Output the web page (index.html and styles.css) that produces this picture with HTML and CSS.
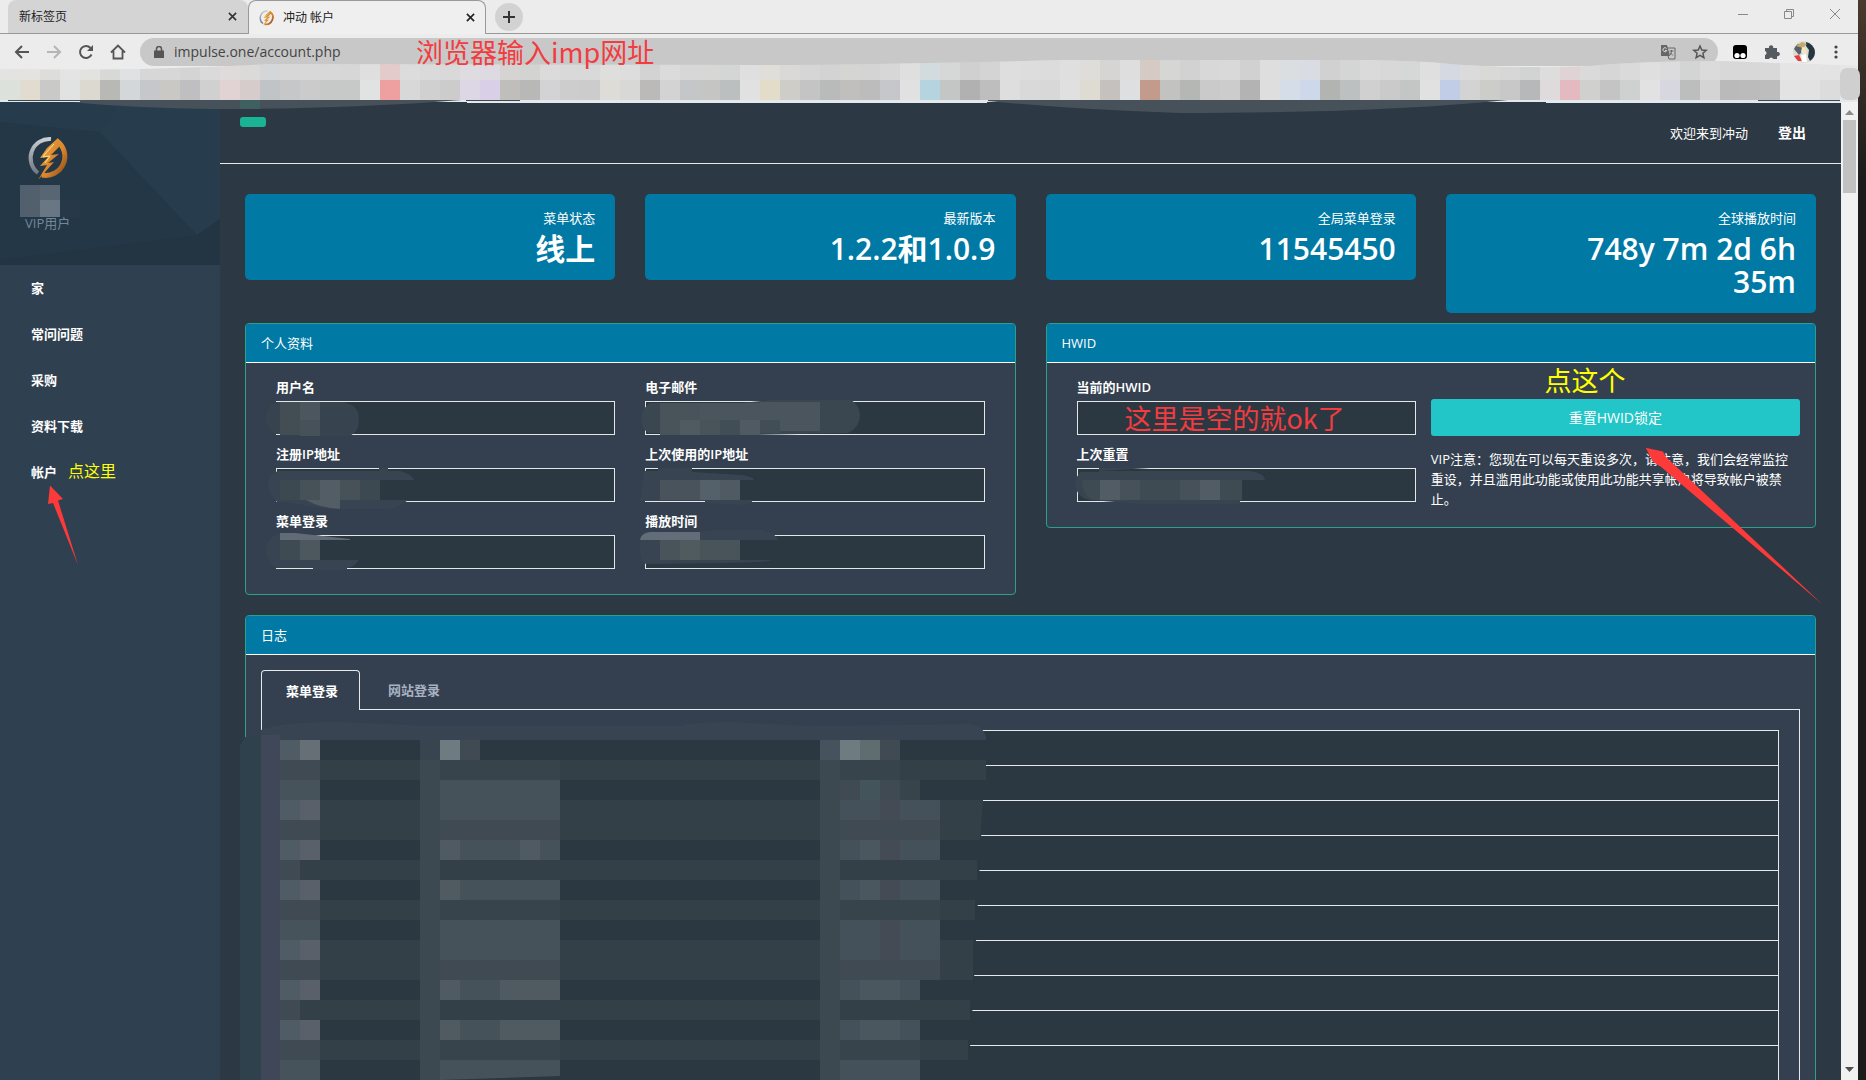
FILE: index.html
```html
<!DOCTYPE html>
<html lang="zh-CN">
<head>
<meta charset="utf-8">
<title>冲动 帐户</title>
<link rel="stylesheet" href="styles.css">
</head>
<body>
<svg width="0" height="0" class="defs" aria-hidden="true">
  <defs>
    <linearGradient id="silver" x1="0" y1="0" x2="0" y2="1"><stop offset="0" stop-color="#c9ccd0"/><stop offset="1" stop-color="#6f7884"/></linearGradient>
    <linearGradient id="gold" x1="0" y1="0" x2="1" y2="1"><stop offset="0" stop-color="#f2b84a"/><stop offset=".6" stop-color="#d9822b"/><stop offset="1" stop-color="#8a4a1a"/></linearGradient>
    <symbol id="logo" viewBox="0 0 44 44">
      <path d="M11 37A19 19 0 0 1 24 3" fill="none" stroke="url(#silver)" stroke-width="4"/>
      <path d="M30 5A19 19 0 0 1 15 39" fill="none" stroke="url(#gold)" stroke-width="5"/>
      <path d="M31 2 20 12l-7 10 8-1-8 9 7-1-9 15 16-18-6 1 11-9-8 1 10-10z" fill="url(#gold)"/>
      <path d="M27 8 18 18l-2 3 7-1-5 7" fill="none" stroke="#ffe08a" stroke-width="1"/>
    </symbol>
  </defs>
</svg>
<div class="window">
  <header class="chrome">
    <div class="tabs">
      <div class="tab"><span>新标签页</span><button aria-label="关闭标签页"><svg viewBox="0 0 10 10" width="9" height="9"><path d="M1 1l8 8M9 1l-8 8" stroke="#333" stroke-width="1.8"/></svg></button></div>
      <div class="tab active"><svg class="fav" width="16" height="16"><use href="#logo"/></svg><span>冲动 帐户</span><button aria-label="关闭标签页"><svg viewBox="0 0 10 10" width="9" height="9"><path d="M1 1l8 8M9 1l-8 8" stroke="#222" stroke-width="1.8"/></svg></button></div>
      <button class="plus" aria-label="新标签"><svg viewBox="0 0 12 12" width="12" height="12"><path d="M6 0v12M0 6h12" stroke="#333" stroke-width="2"/></svg></button>
      <div class="wincontrols">
        <button aria-label="最小化"><svg width="12" height="12"><path d="M1 6.5h10" stroke="#888"/></svg></button>
        <button aria-label="还原"><svg width="12" height="12" fill="none" stroke="#888"><path d="M1.500 3.500h7v7h-7zM3.500 3.500v-2h7v7h-2"/></svg></button>
        <button aria-label="关闭"><svg width="12" height="12"><path d="M1 1l10 10M11 1L1 11" stroke="#888"/></svg></button>
      </div>
    </div>
    <div class="toolbar">
      <button aria-label="后退"><svg viewBox="0 0 16 16" width="16" height="16" fill="none" stroke="#555" stroke-width="2"><path d="M15 8H2M8 2L2 8l6 6"/></svg></button>
      <button aria-label="前进"><svg viewBox="0 0 16 16" width="16" height="16" fill="none" stroke="#b5b5b5" stroke-width="2"><path d="M1 8h13M8 2l6 6-6 6"/></svg></button>
      <button aria-label="刷新"><svg viewBox="0 0 16 16" width="16" height="16"><path d="M13.500 10.500A6 6 0 1 1 12.500 4" fill="none" stroke="#555" stroke-width="2"/><path d="M15 1v6H9z" fill="#555"/></svg></button>
      <button aria-label="主页"><svg viewBox="0 0 16 16" width="16" height="16"><path d="M1 8.500L8 1.500l7 7M3.500 7v7.500h9V7" fill="none" stroke="#555" stroke-width="1.800"/></svg></button>
      <div class="address">
        <svg width="10" height="12" viewBox="0 0 10 12"><path d="M0 4.500h10V12H0z" fill="#555"/><path d="M2.500 5V3a2.500 2.500 0 0 1 5 0v2" fill="none" stroke="#555" stroke-width="1.500"/></svg>
        <input aria-label="地址" value="impulse.one/account.php" spellcheck="false">
        <svg width="16" height="16" viewBox="0 0 16 16"><path d="M1 1h6l3 11H1z" fill="#666"/><path d="M7 4h8v11H9l-1-3" fill="none" stroke="#666"/><path d="M6.500 4.500a2 2 0 1 0 .3 2H5" fill="none" stroke="#ddd"/><path d="M9.500 7h4M11.500 6v1c0 2-1 4-2 4.500M10 8.500l3 3" fill="none" stroke="#666"/></svg>
        <svg width="16" height="16" viewBox="0 0 16 16"><path d="M8 2l1.800 4 4.400.4-3.300 2.900 1 4.300L8 11.300l-3.900 2.300 1-4.300L1.800 6.400 6.200 6z" fill="none" stroke="#555" stroke-width="1.500"/></svg>
      </div>
      <div class="actions">
        <button aria-label="扩展程序"><svg width="14" height="14" viewBox="0 0 14 14"><rect width="14" height="14" rx="3"/><circle cx="4" cy="10.500" r="2.600" fill="#fff"/><circle cx="10" cy="10.500" r="2.600" fill="#fff"/></svg></button>
        <button aria-label="管理扩展"><svg width="16" height="16" viewBox="0 0 16 16"><path d="M1 4h4a2.200 2.200 0 1 1 4.200 0H13v4a2.200 2.200 0 1 1 0 4.200V15H9.200a2.200 2.200 0 0 0-4.200 0H1v-3.800a2.200 2.200 0 0 0 0-4.200z" fill="#555b60"/></svg></button>
        <button aria-label="用户"><svg width="22" height="22" viewBox="0 0 22 22"><circle cx="11" cy="11" r="11" fill="#d8dcd4"/><path d="M13 1a11 11 0 0 1 9 10 11 11 0 0 1-5 9l-2-4 1-7-3-4z" fill="#263640"/><path d="M1 8a11 11 0 0 1 4-5l4 1 2 5-5 5z" fill="#56606a"/><path d="M3 5l6-4 5 2-4 4z" fill="#c4aa6c"/><path d="M9 6l4 1 1 5-3 2-3-3z" fill="#f1e5c3"/><path d="M1 15l5-1 3 6-4 0z" fill="#e43b3b"/><path d="M8 14l5-1 1 8-5 0z" fill="#fff"/></svg></button>
        <button aria-label="菜单"><svg width="4" height="14" viewBox="0 0 4 14" fill="#444"><circle cx="2" cy="2" r="1.600"/><circle cx="2" cy="7" r="1.600"/><circle cx="2" cy="12" r="1.600"/></svg></button>
      </div>
      <p class="note red note-url">浏览器输入imp网址</p>
    </div>
    <div class="bookmarks">
      <svg class="bookmark-mosaic" width="1862" height="54" viewBox="0 59 1862 54" aria-hidden="true">
        <defs><clipPath id="brush"><path d="M0 69Q120 72 270 64L790 65Q960 63 1060 60H1370Q1420 61 1440 63Q1500 69 1590 66Q1640 61 1720 61L1858 66V100H0z"/></clipPath></defs>
        <path d="M72 100h390Q350 109 215 109Q130 108 72 102zM988 100h520Q1380 113 1180 113Q1080 110 988 101z" fill="#46515a"/>
        <path d="M240 100h20v9h-20z" fill="#3f5f60"/>
        <path d="M0 100h80v2H0zM467 101h520v2H467zM1546 101h295v2H1546z" fill="#e3e8ec"/>
        <path d="M8 100h72v1H8zM466 100h54v1h-54zM1758 100h82v1h-82z" fill="#3d4852"/>
        <g clip-path="url(#brush)">
          <path d="M0 59h1862v41H0z" fill="#dedede"/>
          <path d="M0 59h140v41H0zM1720 59h140v41h-140z" fill="#e6e6e6"/>
          <g id="marks" class="cells">
            <rect x="0" y="80" fill="#dde1db"/><rect x="20" y="80" fill="#e1dccf"/><rect x="40" y="80" fill="#c9c9c8"/><rect x="60" y="80" fill="#e1e2e2"/><rect x="80" y="80" fill="#dbd9d0"/><rect x="100" y="80" fill="#b8b8b5"/><rect x="120" y="80" fill="#d3d7d9"/><rect x="140" y="80" fill="#c5c7ca"/><rect x="160" y="80" fill="#cac8c5"/><rect x="180" y="80" fill="#bfbec0"/><rect x="200" y="80" fill="#cfd0cf"/><rect x="220" y="80" fill="#e1d3d3"/><rect x="240" y="80" fill="#d7cccc"/><rect x="260" y="80" fill="#c0c4c7"/><rect x="280" y="80" fill="#c5c7c8"/><rect x="300" y="80" fill="#cacbca"/><rect x="320" y="80" fill="#c7c9c8"/><rect x="340" y="80" fill="#c7c8c8"/><rect x="360" y="80" fill="#e1e2e2"/><rect x="380" y="80" fill="#ee9f9f"/><rect x="400" y="80" fill="#d8d8d8"/><rect x="420" y="80" fill="#cfd0cf"/><rect x="440" y="80" fill="#cccccc"/><rect x="460" y="80" fill="#ddd6e5"/><rect x="480" y="80" fill="#d9d0e8"/><rect x="500" y="80" fill="#bfbebb"/><rect x="520" y="80" fill="#b8b8b6"/><rect x="540" y="80" fill="#d3d3d5"/><rect x="560" y="80" fill="#cdcdcd"/><rect x="580" y="80" fill="#cccccc"/><rect x="600" y="80" fill="#dddcd6"/><rect x="620" y="80" fill="#d8d9d7"/><rect x="640" y="80" fill="#bbbab8"/><rect x="660" y="80" fill="#d3d3d3"/><rect x="680" y="80" fill="#c5c6c8"/>
            <rect x="700" y="80" fill="#c5c5c3"/><rect x="720" y="80" fill="#bcbfbf"/><rect x="740" y="80" fill="#e1e1e1"/><rect x="760" y="80" fill="#e3dcc9"/><rect x="780" y="80" fill="#cfcdc8"/><rect x="800" y="80" fill="#c4c4c4"/><rect x="820" y="80" fill="#b9bbba"/><rect x="840" y="80" fill="#c1bfbd"/><rect x="860" y="80" fill="#bcbcbc"/><rect x="880" y="80" fill="#c5c7ca"/><rect x="900" y="80" fill="#e1e1e1"/><rect x="920" y="80" fill="#b5d4df"/><rect x="940" y="80" fill="#c4c5c5"/><rect x="960" y="80" fill="#b0b1b0"/><rect x="980" y="80" fill="#bdbebd"/><rect x="1000" y="80" fill="#dedede"/><rect x="1020" y="80" fill="#d9d9d9"/><rect x="1040" y="80" fill="#d8d8d8"/><rect x="1060" y="80" fill="#e0e0e0"/><rect x="1080" y="80" fill="#dedbd2"/><rect x="1100" y="80" fill="#c4c1be"/><rect x="1120" y="80" fill="#dddfe1"/><rect x="1140" y="80" fill="#c39b8d"/><rect x="1160" y="80" fill="#c2c3c0"/><rect x="1180" y="80" fill="#b5b7b5"/><rect x="1200" y="80" fill="#cacaca"/><rect x="1220" y="80" fill="#cccccc"/><rect x="1240" y="80" fill="#b3b3b3"/><rect x="1260" y="80" fill="#dededf"/><rect x="1280" y="80" fill="#d5dde9"/><rect x="1300" y="80" fill="#cdd8ea"/><rect x="1320" y="80" fill="#b2b4b2"/><rect x="1340" y="80" fill="#bcc0c1"/><rect x="1360" y="80" fill="#d0d0d0"/><rect x="1380" y="80" fill="#cacaca"/><rect x="1400" y="80" fill="#c4c5c5"/><rect x="1420" y="80" fill="#e1e1e1"/><rect x="1440" y="80" fill="#c1cde6"/><rect x="1460" y="80" fill="#d3d3d3"/><rect x="1480" y="80" fill="#cccdc9"/><rect x="1500" y="80" fill="#c9c8c9"/><rect x="1520" y="80" fill="#b7b8b9"/><rect x="1540" y="80" fill="#dfdadc"/><rect x="1560" y="80" fill="#e4bac0"/><rect x="1580" y="80" fill="#d0d1cf"/><rect x="1600" y="80" fill="#c4c4c4"/><rect x="1620" y="80" fill="#cfd0d0"/><rect x="1640" y="80" fill="#e2e2e2"/><rect x="1660" y="80" fill="#d6d7df"/><rect x="1680" y="80" fill="#bbbebd"/><rect x="1700" y="80" fill="#d3d4d3"/><rect x="1720" y="80" fill="#bbbaba"/><rect x="1740" y="80" fill="#bcbbbc"/><rect x="1760" y="80" fill="#bdbdbd"/><rect x="1780" y="80" fill="#e3e3e3"/><rect x="1800" y="80" fill="#e2e2e2"/><rect x="1820" y="80" fill="#dcdcdc"/>
          </g>
          <use href="#marks" y="-20" opacity=".3"/>
        </g>
        <rect x="1840" y="68" width="20" height="32" rx="7" fill="#cfcfcf"/>
      </svg>
    </div>
  </header>

  <div class="page">
    <aside class="sidebar">
      <div class="profile">
        <svg class="facets" viewBox="0 102 220 163" preserveAspectRatio="none" aria-hidden="true">
          <path d="M0 102h220v163H0z" fill="#243747"/>
          <path d="M0 102h120l-20 30L0 122z" fill="#263b4b"/>
          <path d="M120 102h100v117l-23 16L100 132z" fill="#273c4c"/>
          <path d="M197 235l23-16v46H0v-5z" fill="#233543"/>
        </svg>
        <svg class="logo" width="44" height="44"><use href="#logo"/></svg>
        <svg class="name" width="60" height="32" aria-hidden="true"><path d="M0 0h40v32H0z" fill="#52606e"/><path d="M20 0h20v15H20z" fill="#586573"/><path d="M20 15h20v17H20z" fill="#697784"/><path d="M40 15h20v17H40z" fill="#273949"/></svg>
        <p>VIP用户</p>
      </div>
      <nav>
        <a href="#">家</a>
        <a href="#">常问问题</a>
        <a href="#">采购</a>
        <a href="#">资料下载</a>
        <a href="#">帐户<span class="note yellow note-nav">点这里</span></a>
      </nav>
      <svg class="arrow-nav" width="40" height="90" viewBox="40 480 40 90" aria-hidden="true"><path d="M50 485.500L63 499l-5 1.500L78 565 53 503l-5 1z" fill="#fb3a39"/></svg>
    </aside>

    <main>
      <div class="topbar">
        <button class="toggle" aria-label="切换菜单"></button>
        <span>欢迎来到冲动</span>
        <a href="#">登出</a>
      </div>
      <div class="content">
        <section class="stats">
          <div class="stat"><p>菜单状态</p><h2>线上</h2></div>
          <div class="stat"><p>最新版本</p><h2>1.2.2和1.0.9</h2></div>
          <div class="stat"><p>全局菜单登录</p><h2>11545450</h2></div>
          <div class="stat"><p>全球播放时间</p><h2>748y 7m 2d 6h 35m</h2></div>
        </section>

        <section class="panels">
          <div class="panel">
            <h3>个人资料</h3>
            <div class="fields">
              <div class="field"><label for="user">用户名</label><input id="user" readonly></div>
              <div class="field"><label for="mail">电子邮件</label><input id="mail" readonly></div>
              <div class="field"><label for="regip">注册IP地址</label><input id="regip" readonly></div>
              <div class="field"><label for="lastip">上次使用的IP地址</label><input id="lastip" readonly></div>
              <div class="field"><label for="logins">菜单登录</label><input id="logins" readonly></div>
              <div class="field"><label for="play">播放时间</label><input id="play" readonly></div>
            </div>
            <svg class="mosaic" width="770" height="272" viewBox="245 323 770 272" aria-hidden="true">
              <path d="M276 402h67q16 3 16 17t-10 17h-42v-2h-31q-10-4-10-16t10-16z" fill="#37434f"/>
              <path d="M280 402h20v33h-20z" fill="#434e54"/><path d="M300 402h20v18h-20z" fill="#4c565f"/><path d="M300 420h20v16h-20z" fill="#465159"/>
              <path d="M650 403l90 0 32-3h79q9 5 9 16t-12 17l-98 2h-87v-2h-14q-8-4-8-14t9-16z" fill="#3a4650"/>
              <path d="M660 403h80v32h-80z" fill="#48535a"/><path d="M700 403h80v17h-80zM760 402h60v29h-60z" fill="#4a555d"/><path d="M680 420h20v15h-20zM740 420h20v15h-20z" fill="#505b61"/><path d="M720 420h20v15h-20zM760 420h20v13h-20z" fill="#424e56"/>
              <path d="M278 471h101v-3h9v3h12q12 3 14 9h-34v20h28q-10 9-22 9h-60l-40-7h-9q-9-9-9-18 0-10 10-13z" fill="#384452"/>
              <path d="M280 480h20v20h-20zM360 480h20v20h-20z" fill="#3d4951"/><path d="M300 480h20v20h-20zM340 480h20v20h-20z" fill="#465158"/><path d="M320 480h20v29q-20-1-34-9h14z" fill="#525d66"/>
              <path d="M644 471h14v-3h34v4l50 3q12 2 12 5h-14v20h13q-2 5-12 5l-36-2v-2h-65z" fill="#384452"/>
              <path d="M660 480h80v20h-80z" fill="#48535b"/><path d="M700 480h20v20h-20z" fill="#54616a"/><path d="M720 480h20v20h-20z" fill="#4f5a62"/>
              <path d="M280 533h18l54 7h-32v20h39q-6 8-12 8v2h-34v-2h-37q-10-8-10-18 0-12 14-17z" fill="#384452"/>
              <path d="M280 533h15l55 6v1h-70z" fill="#606b77"/><path d="M280 540h20v20h-20z" fill="#3f4b53"/><path d="M300 540h20v20h-20z" fill="#4c575e"/>
              <path d="M644 532h50l20-2h46q15 2 18 10h-38v20h32q-8 3-46 3l-80 1q-6-2-6-12v-10z" fill="#384452"/>
              <path d="M640 540q1-7 10-8h50v8z" fill="#626d79"/><path d="M660 540h80v20h-80z" fill="#48535a"/><path d="M680 540h20v20h-20z" fill="#505b60"/>
            </svg>
          </div>
          <div class="panel">
            <h3>HWID</h3>
            <div class="hwid">
              <div class="hwid-fields">
                <div class="field"><label for="hwid">当前的HWID</label><input id="hwid" readonly></div>
                <div class="field"><label for="reset">上次重置</label><input id="reset" readonly></div>
              </div>
              <div class="hwid-action">
                <button>重置HWID锁定</button>
                <p>VIP注意：您现在可以每天重设多次，请注意，我们会经常监控重设，并且滥用此功能或使用此功能共享帐户将导致帐户被禁止。</p>
              </div>
            </div>
            <svg class="mosaic" width="770" height="205" viewBox="1046 323 770 205" aria-hidden="true">
              <path d="M1080 472h19v-4h-17 68l-50 3h150q14 2 15 9h-25v22h10q-6 2-20 2h-90l-50-4q-15-2-15-20z" fill="#384450"/>
              <path d="M1082 480h160v20h-150q-10-6-10-20z" fill="#3f4b53"/><path d="M1100 480h20v20h-20z" fill="#515c65"/><path d="M1120 480h20v20h-20zM1180 480h20v20h-20z" fill="#465159"/><path d="M1200 480h20v20h-20z" fill="#515c65"/>
            </svg>
            <p class="note red note-empty">这里是空的就ok了</p>
            <p class="note yellow note-click">点这个</p>
            <svg class="arrow-reset" width="190" height="165" viewBox="1640 443 190 165" aria-hidden="true"><path d="M1646.700 447.700L1664 451.500l3 5.500L1823.500 604.500 1661 466l-7-4z" fill="#fb3a39"/></svg>
          </div>
        </section>

        <section class="panel logs">
          <h3>日志</h3>
          <div class="logs-body">
            <div class="log-tabs"><button class="on">菜单登录</button><button>网站登录</button></div>
            <div class="log-box">
              <table aria-label="菜单登录"><tbody>
                <tr><td></td></tr><tr><td></td></tr><tr><td></td></tr><tr><td></td></tr><tr><td></td></tr><tr><td></td></tr><tr><td></td></tr><tr><td></td></tr><tr><td></td></tr><tr><td></td></tr><tr><td></td></tr>
              </tbody></table>
            </div>
          </div>
          <svg class="mosaic log-mosaic" width="750" height="360" viewBox="240 720 750 360" aria-hidden="true">
            <path d="M240 746q2-5 5-9h16v343h-21z" fill="#2e414d"/>
            <path d="M261 730q20-9 80-8l90 4h250q10-4 50-4l80 4 160-2q13 2 15 14v2H280v340h-19z" fill="#394452"/>
            <path d="M261 735h19v345h-19z" fill="#3f4758"/>
            <path d="M280 740h705l-2 60-5 100-5 100-5 80H280z" fill="#2b3741"/>
            <path d="M280 760h706v20H280zM280 800h703l-3 40H280zM280 860h697v20H280zM280 900h695v20H280zM280 940h693v40H280zM280 1000h690v20H280zM280 1040h688v20H280z" fill="#344048"/>
            <path d="M420 740h20v340h-20zM820 760h20v320h-20z" fill="#3d4951"/>
            <path d="M820 740h20v20h-20z" fill="#46525d"/><path d="M420 740h20v20h-20z" fill="#374550"/>
            <path d="M280 760h40v20h-40zM280 820h40v20h-40zM280 860h20v20h-20zM280 900h40v20h-40zM280 960h40v20h-40zM280 1000h20v20h-20zM280 1040h40v20h-40z" fill="#3f4a52"/>
            <path d="M280 780h40v20h-40zM280 920h40v20h-40zM280 1060h40v20h-40z" fill="#47535b"/>
            <path d="M280 740h20v20h-20zM280 800h20v20h-20zM280 840h20v20h-20zM280 880h20v20h-20zM280 940h20v20h-20zM280 980h20v20h-20zM280 1020h20v20h-20z" fill="#4f5b65"/>
            <path d="M300 800h20v20h-20zM300 840h20v20h-20zM300 880h20v20h-20zM300 940h20v20h-20zM300 980h20v20h-20zM300 1020h20v20h-20z" fill="#5a606a"/>
            <path d="M300 740h20v20h-20z" fill="#666f75"/>
            <path d="M440 740h20v20h-20zM840 740h20v20h-20z" fill="#6e7b80"/><path d="M860 740h20v20h-20z" fill="#5f6c70"/>
            <path d="M460 740h20v20h-20zM880 740h20v20h-20zM440 820h120v20H440zM440 960h120v20H440zM840 820h100v20H840zM840 960h100v20H840zM840 780h60v20h-60z" fill="#3f4a52"/>
            <path d="M440 760h120v20H440zM440 900h120v20H440zM440 1040h120v20H440zM840 760h60v20h-60zM840 900h100v20H840zM840 1040h80v20h-80zM900 780h20v20h-20z" fill="#38444c"/>
            <path d="M440 780h120v40H440zM440 840h120v20H440zM440 880h120v20H440zM440 920h120v40H440zM440 980h120v20H440zM440 1020h120v20H440zM440 1060h120v16l-120 4z" fill="#46525a"/>
            <path d="M840 800h100v20H840zM840 840h100v20H840zM840 880h100v20H840zM840 920h100v40H840zM840 980h80v20h-80zM840 1020h80v20h-80zM840 1060h80v20h-80z" fill="#45515a"/>
            <path d="M440 840h20v20h-20zM440 880h20v20h-20zM440 980h20v20h-20zM440 1020h20v20h-20zM520 840h20v20h-20zM500 980h60v20h-60zM500 1020h60v20h-60z" fill="#4f5b60"/>
            <path d="M860 840h20v20h-20zM860 880h20v20h-20zM860 980h40v20h-40zM860 1020h40v20h-40z" fill="#4b575f"/>
            <path d="M860 780h20v20h-20z" fill="#43545b"/><path d="M880 800h20v20h-20zM880 840h20v20h-20zM880 880h20v20h-20zM880 920h20v40h-20z" fill="#454b54"/>
          </svg>
        </section>
      </div>
    </main>
    <div class="scrollbar" aria-hidden="true">
      <svg width="9" height="5"><path d="M0 5l4.500-5L9 5z" fill="#8c8c8c"/></svg>
      <i></i>
      <svg width="9" height="5"><path d="M0 0h9L4.500 5z" fill="#505050"/></svg>
    </div>
  </div>
</div>
<div class="desktop" aria-hidden="true"></div>
</body>
</html>
```
FILE: styles.css
```css
* { box-sizing: border-box; }
body {
  margin: 0;
  display: flex;
  height: 100vh;
  overflow: hidden;
  background: #1c1c1c;
  color: #fff;
  font: 13px/18px "Open Sans", "Noto Sans CJK SC", sans-serif;
}
p, h2, h3 { margin: 0; }
button { border: 0; padding: 0; background: none; font: inherit; color: inherit; }
a { color: inherit; text-decoration: none; }
svg { display: block; flex: none; }
.defs { position: absolute; }
.window { flex: 1; min-width: 0; display: flex; flex-direction: column; }
.desktop { width: 8px; background: linear-gradient(#4a3b2f, #3a3028 60px, #1c1c1c 180px); }

/* browser chrome */
.chrome { background: #ececec; color: #222; position: relative; z-index: 2; }
.tabs { display: flex; height: 34px; padding-left: 8px; border-bottom: 1px solid #999; font-size: 12px; }
.tab { width: 240px; display: flex; align-items: center; padding: 0 11px; background: #d4d4d4; border-radius: 8px 8px 0 0; }
.tab span { flex: 1; }
.tab.active { width: 238px; height: 34px; background: #efefef; border: 1px solid #999; border-bottom: 0; gap: 8px; padding: 0 10px; }
.plus { width: 28px; height: 28px; margin: 3px 0 0 9px; border-radius: 50%; background: #d2d2d2; display: grid; place-items: center; }
.wincontrols { margin-left: auto; display: flex; gap: 34px; padding: 8px 17px 0 0; height: 20px; }
.toolbar { position: relative; display: flex; align-items: center; gap: 16px; height: 36px; padding: 0 6px 0 14px; }
.toolbar > button { flex: none; }
.address { flex: 1; height: 28px; margin: 0 -10px 0 -2px; padding: 0 10px 0 14px; display: flex; align-items: center; gap: 16px; background: #c8c8c8; border-radius: 14px; }
.address input { flex: 1; min-width: 0; margin-left: -6px; padding: 0; border: 0; background: none; color: #444; font: 14px/20px "Open Sans", sans-serif; outline: 0; }
.actions { display: flex; }
.actions button { width: 32px; height: 28px; display: grid; place-items: center; }
.bookmarks { height: 32px; position: relative; background: #e3e8ec; }
.bookmark-mosaic { position: absolute; left: 0; top: -11px; }
.cells rect { width: 20px; height: 20px; }

/* page */
.page { flex: 1; min-height: 0; display: flex; overflow: hidden; background: #2c3843; }
.sidebar { width: 220px; flex: none; background: #2f4050; position: relative; }
.profile { position: relative; height: 163px; padding: 34px 20px 0; color: #73879a; }
.facets { position: absolute; inset: 0; width: 100%; height: 100%; }
.logo { position: relative; margin-left: 7px; }
.name { position: relative; margin-top: 5px; }
.profile p { position: relative; margin: -3px 0 0 5px; }
nav a { position: relative; display: block; padding: 14px 31px; font-weight: 600; color: #fff; }
.arrow-nav { position: absolute; left: 40px; top: 378px; }
.scrollbar { width: 17px; flex: none; background: #f1f1f1; display: flex; flex-direction: column; align-items: center; padding: 8px 0; }
.scrollbar i { width: 13px; height: 73px; margin: 5px 0 auto; background: #c1c1c1; }

main { flex: 1; min-width: 0; }
.topbar { height: 62px; border-bottom: 1px solid #e7eaec; display: flex; align-items: center; padding: 0 35px 0 20px; }
.topbar span { margin-left: auto; }
.topbar a { margin-left: 30px; font-size: 14px; font-weight: 600; }
.toggle { width: 26px; height: 10px; border-radius: 3px; background: #1ab394; align-self: flex-start; margin-top: 15px; }
.content { padding: 30px 25px 0; }
.stats { display: grid; grid-template-columns: repeat(4, 1fr); gap: 30px; align-items: start; margin-bottom: 10px; }
.stat { background: #0079a5; border-radius: 5px; padding: 15px 20px; text-align: right; }
.stat p { margin-bottom: 5px; }
.stat h2 { margin-left: 30%; font-size: 30px; line-height: 33px; font-weight: 600; }

.panels { display: grid; grid-template-columns: 1fr 1fr; gap: 30px; align-items: start; margin-bottom: 20px; }
.panel { position: relative; border: 1px solid #28a28d; border-radius: 4px; background: #343f4f; }
.panel h3 { height: 39px; padding: 10px 15px; border-bottom: 1px solid #fff; border-radius: 3px 3px 0 0; background: #0079a5; font-size: 13px; font-weight: 400; }
.fields { display: grid; grid-template-columns: 1fr 1fr; column-gap: 30px; padding: 15px 30px; }
.field { display: flex; flex-direction: column; gap: 5px; margin-bottom: 10px; }
.field label { font-weight: 600; }
.field input { width: 100%; height: 34px; border: 1px solid #e5e6e7; border-radius: 0; background: #2b3841; color: #fff; padding: 6px 12px; font: inherit; outline: 0; }
.hwid { display: grid; grid-template-columns: 1fr 1fr; padding: 15px; }
.hwid-fields { padding: 0 15px; }
.hwid-action { padding-top: 21px; }
.hwid-action button { display: block; width: 100%; height: 37px; border-radius: 3px; background: #23c6c8; font-size: 14px; }
.hwid-action p { margin-top: 13px; line-height: 20px; }
.mosaic { position: absolute; left: -1px; top: -1px; }

.logs-body { padding: 15px; }
.log-tabs { display: flex; height: 40px; font-weight: 600; color: #a7b1c2; }
.log-tabs button { padding: 0 25px; border: 1px solid transparent; margin-right: 2px; }
.log-tabs .on { position: relative; z-index: 1; padding: 0 21px 0 24px; color: #fff; border-color: #e7eaec; border-bottom: 0; border-radius: 4px 4px 0 0; background: #343f4f; }
.log-box { margin-top: -1px; border: 1px solid #e7eaec; padding: 20px; }
table { width: 100%; border-collapse: collapse; background: #2b3841; }
td { height: 35px; padding: 0; border: 1px solid #e7eaec; }
.log-mosaic { left: -6px; top: 104px; }

/* handwritten notes on top of the page */
.note { position: absolute; z-index: 1; white-space: nowrap; font-family: "Noto Sans CJK SC", sans-serif; font-weight: 400; font-size: 27px; line-height: 32px; pointer-events: none; }
.red { color: #f23c40; }
.yellow { color: #ff0; }
.note-url { left: 416px; top: 2px; }
.note-nav { left: 68px; top: 5px; font-size: 16px; }
.note-empty { left: 78px; top: 78px; }
.note-click { left: 498px; top: 40px; }
.arrow-reset { position: absolute; z-index: 1; right: -14px; top: 119px; }
```
